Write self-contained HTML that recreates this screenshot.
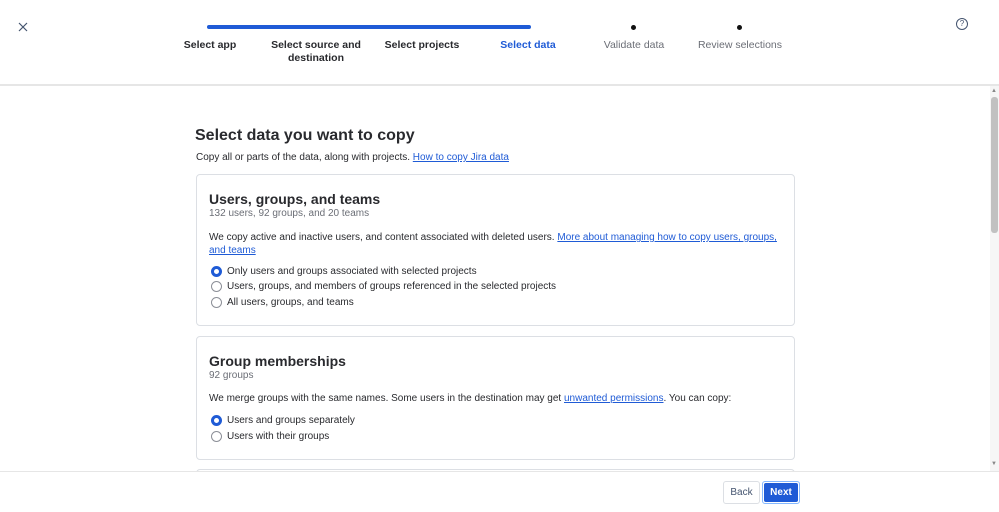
<!DOCTYPE html>
<html><head><style>
*{margin:0;padding:0;box-sizing:border-box}
body{width:999px;height:512px;overflow:hidden;background:#fff;font-family:"Liberation Sans",sans-serif;color:#172b4d;position:relative}
.a{position:absolute}
.step{position:absolute;top:39px;font-size:10.5px;font-weight:bold;color:#292a2e;text-align:center;line-height:13px}
.g{color:#6b6e76;font-weight:normal}
.card{position:absolute;left:196px;width:599px;border:1px solid #dcdfe4;border-radius:4px;background:#fff}
h2{font-size:14px;font-weight:bold;color:#292a2e}
.sub{font-size:10px;color:#6b6e76}
.t{font-size:10px;color:#292a2e}
a{color:#1f5bd6;text-decoration:underline}
.r{position:absolute;font-size:10px;color:#292a2e;padding-left:18px;line-height:12px}
.r:before{content:"";position:absolute;left:2px;top:0;width:9px;height:9px;border:1px solid #8c8f97;border-radius:50%}
.r.on:before{border:3px solid #1f5bd6;width:5px;height:5px}
</style></head><body>
<svg class="a" style="left:18px;top:22px" width="10" height="10" viewBox="0 0 10 10"><path d="M1 1L9 9M9 1L1 9" stroke="#44546f" stroke-width="1.2"/></svg>
<div class="a" style="left:207px;top:25px;width:324px;height:4px;background:#1f5bd6;border-radius:2px"></div>
<div class="a" style="left:631px;top:25px;width:5px;height:5px;background:#111;border-radius:50%"></div>
<div class="a" style="left:737px;top:25px;width:5px;height:5px;background:#111;border-radius:50%"></div>
<div class="step" style="left:170px;width:80px">Select app</div>
<div class="step" style="left:266px;width:100px">Select source and<br>destination</div>
<div class="step" style="left:372px;width:100px">Select projects</div>
<div class="step" style="left:478px;width:100px;color:#1f5bd6">Select data</div>
<div class="step g" style="left:584px;width:100px">Validate data</div>
<div class="step g" style="left:690px;width:100px">Review selections</div>
<div class="a" style="left:956px;top:18px;width:12px;height:12px;border:1.3px solid #44546f;border-radius:50%;font-size:8px;text-align:center;line-height:10px;color:#44546f">?</div>
<div class="a" style="left:0;top:84px;width:999px;height:2px;background:#e6e6e6"></div>
<div class="a" style="left:990px;top:86px;width:9px;height:385px;background:#f6f6f6"></div>
<div class="a" style="left:991px;top:97px;width:7px;height:136px;background:#c1c1c1;border-radius:3px"></div>
<div class="a" style="left:991px;top:88px;font-size:6px;color:#888">▲</div>
<div class="a" style="left:991px;top:461px;font-size:6px;color:#888">▼</div>
<div class="a" style="left:195px;top:127px;font-size:16px;font-weight:bold;color:#292a2e">Select data you want to copy</div>
<div class="a t" style="left:196px;top:152px">Copy all or parts of the data, along with projects. <a>How to copy Jira data</a></div>
<div class="card" style="top:174px;height:152px">
<h2 class="a" style="left:12px;top:16px">Users, groups, and teams</h2>
<div class="a sub" style="left:12px;top:33px">132 users, 92 groups, and 20 teams</div>
<div class="a t" style="left:12px;top:56px;width:570px;line-height:13px">We copy active and inactive users, and content associated with deleted users. <a>More about managing how to copy users, groups, and teams</a></div>
<div class="r on" style="left:12px;top:91px">Only users and groups associated with selected projects</div>
<div class="r" style="left:12px;top:106px">Users, groups, and members of groups referenced in the selected projects</div>
<div class="r" style="left:12px;top:122px">All users, groups, and teams</div>
</div>
<div class="card" style="top:336px;height:124px">
<h2 class="a" style="left:12px;top:16px">Group memberships</h2>
<div class="a sub" style="left:12px;top:33px">92 groups</div>
<div class="a t" style="left:12px;top:56px">We merge groups with the same names. Some users in the destination may get <a>unwanted permissions</a>. You can copy:</div>
<div class="r on" style="left:12px;top:78px">Users and groups separately</div>
<div class="r" style="left:12px;top:94px">Users with their groups</div>
</div>
<div class="card" style="top:469px;height:30px"></div>
<div class="a" style="left:0;top:471px;width:999px;height:41px;background:#fff;border-top:1px solid #e6e6e6"></div>
<div class="a" style="left:723px;top:481px;width:37px;height:23px;border:1px solid #dcdfe4;border-radius:3px;font-size:10px;color:#44546f;text-align:center;line-height:21px">Back</div>
<div class="a" style="left:762px;top:481px;width:38px;height:23px;border:1px solid #85b8ff;border-radius:3px;padding:1px"><div style="background:#1f5bd6;color:#fff;font-size:10px;font-weight:bold;text-align:center;line-height:19px;border-radius:2px;height:19px">Next</div></div>
</body></html>
